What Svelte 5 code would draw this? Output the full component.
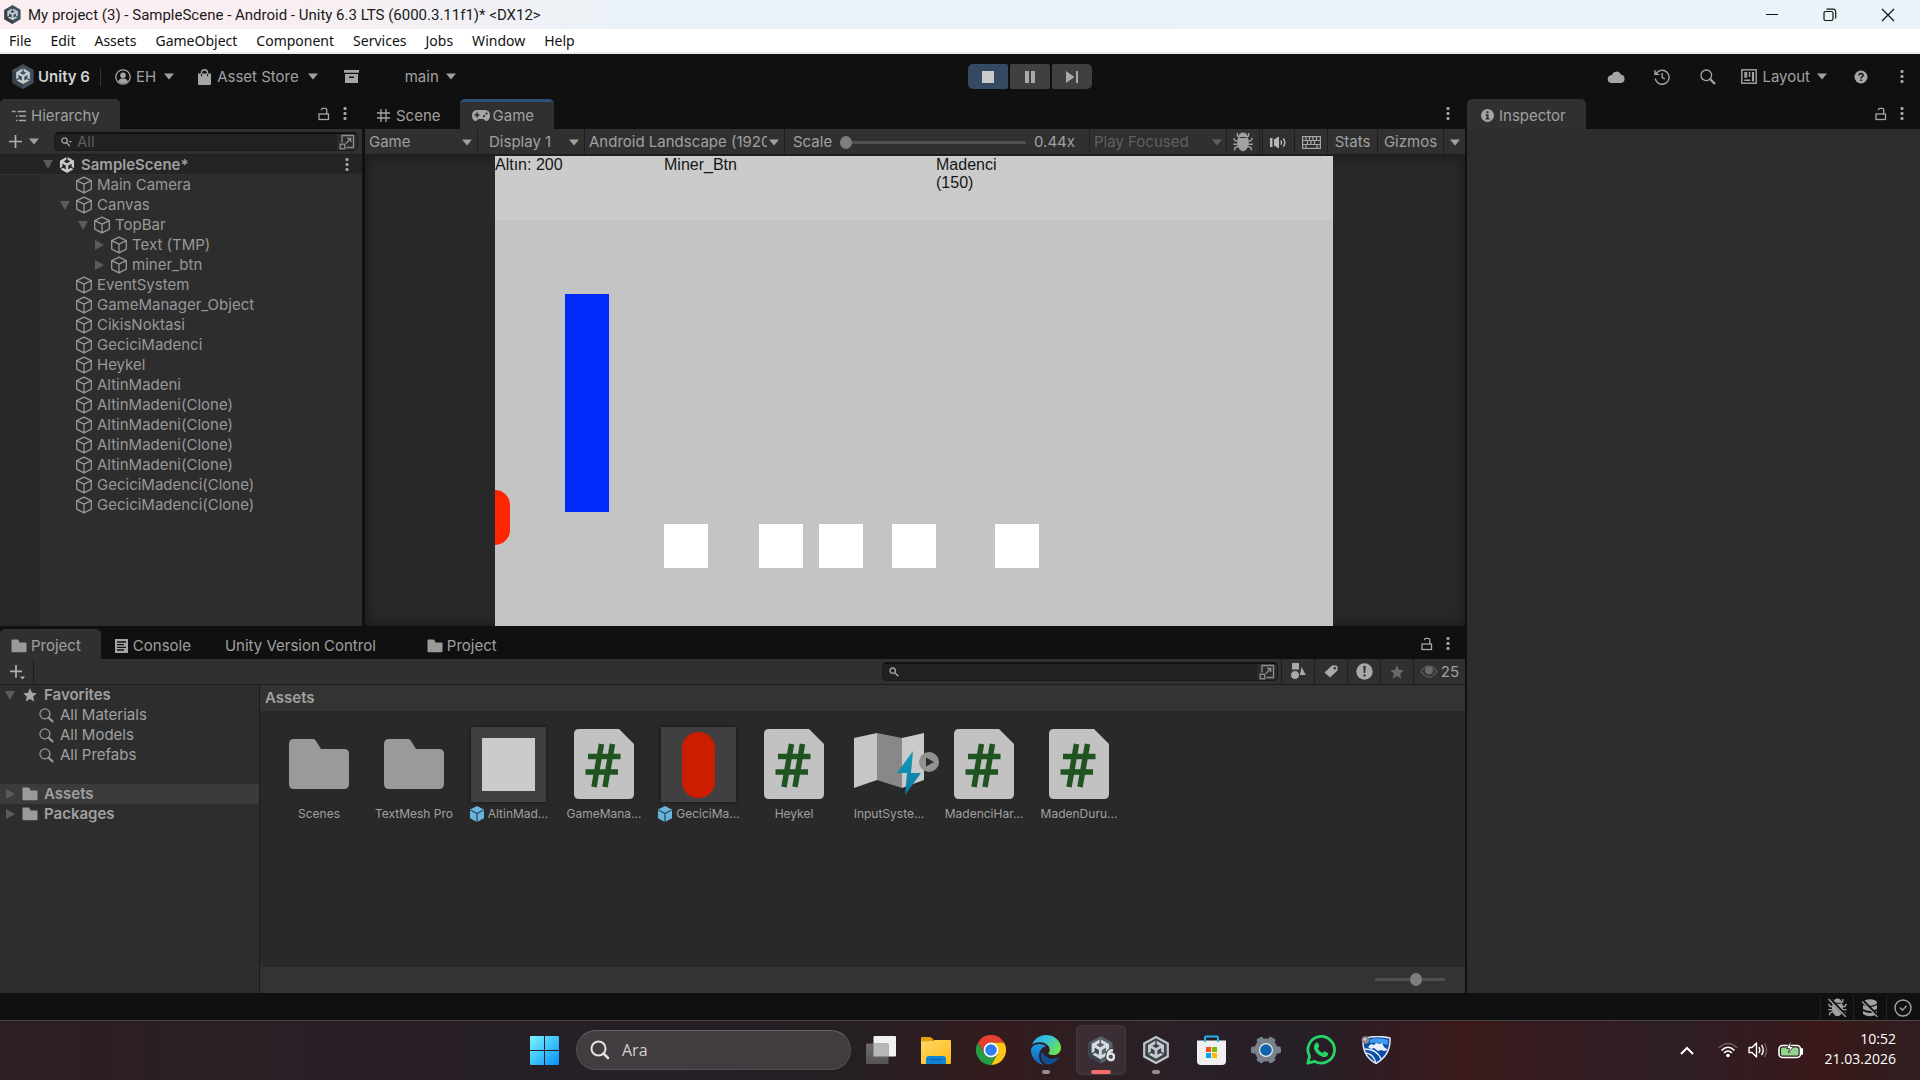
<script>
  const menus = ['File', 'Edit', 'Assets', 'GameObject', 'Component', 'Services', 'Jobs', 'Window', 'Help'];

  const tree = [
    { name: 'Main Camera', depth: 0 },
    { name: 'Canvas', depth: 0, arrow: 'open' },
    { name: 'TopBar', depth: 1, arrow: 'open' },
    { name: 'Text (TMP)', depth: 2, arrow: 'closed' },
    { name: 'miner_btn', depth: 2, arrow: 'closed' },
    { name: 'EventSystem', depth: 0 },
    { name: 'GameManager_Object', depth: 0 },
    { name: 'CikisNoktasi', depth: 0 },
    { name: 'GeciciMadenci', depth: 0 },
    { name: 'Heykel', depth: 0 },
    { name: 'AltinMadeni', depth: 0 },
    { name: 'AltinMadeni(Clone)', depth: 0 },
    { name: 'AltinMadeni(Clone)', depth: 0 },
    { name: 'AltinMadeni(Clone)', depth: 0 },
    { name: 'AltinMadeni(Clone)', depth: 0 },
    { name: 'GeciciMadenci(Clone)', depth: 0 },
    { name: 'GeciciMadenci(Clone)', depth: 0 }
  ];

  const mines = [169, 264, 324, 397, 500];

  const assets = [
    { name: 'Scenes', kind: 'folder' },
    { name: 'TextMesh Pro', kind: 'folder' },
    { name: 'AltinMad...', kind: 'square', prefab: true },
    { name: 'GameMana...', kind: 'script' },
    { name: 'GeciciMa...', kind: 'capsule', prefab: true },
    { name: 'Heykel', kind: 'script' },
    { name: 'InputSyste...', kind: 'input' },
    { name: 'MadenciHar...', kind: 'script' },
    { name: 'MadenDuru...', kind: 'script' }
  ];

  const unityMark =
    'm12.9288 4.2939 3.7997 2.1929c.1366.077.1415.2905 0 .3675l-4.515 2.6076a.4192.4192 0 0 1-.4246 0L7.274 6.8543c-.139-.0745-.1415-.293 0-.3675l3.7972-2.193V0L1.3758 5.5977V16.793l3.7177-2.1456v-4.3858c-.0025-.1565.1813-.2682.318-.1838l4.5148 2.6076a.4252.4252 0 0 1 .2136.3676v5.2127c.0025.1565-.1813.2682-.3179.1838l-3.7996-2.1929-3.7178 2.1457L12 24l9.6954-5.5977-3.7178-2.1457-3.7996 2.1929c-.1341.082-.3229-.0248-.3179-.1838v-5.2127c0-.1565.087-.2956.2136-.3676l4.5149-2.6076c.134-.082.3228.0224.3179.1838v4.3858l3.7177 2.1456V5.5977L12.9288 0Z';
</script>

{#snippet caret()}
  <svg class="caret" width="10" height="7" viewBox="0 0 10 7"><path d="M0 .5h10L5 6.5z" fill="currentColor" /></svg>
{/snippet}

{#snippet dots()}
  <svg width="4" height="14" viewBox="0 0 4 14" fill="#a5a5a5"><rect x=".5" y="0" width="3" height="3" rx="1" /><rect x=".5" y="5" width="3" height="3" rx="1" /><rect x=".5" y="10" width="3" height="3" rx="1" /></svg>
{/snippet}

{#snippet lock()}
  <svg width="12" height="14" viewBox="0 0 12 14" fill="none" stroke="#a5a5a5" stroke-width="1.3"><rect x="1" y="7" width="9.5" height="5.5" /><path d="M3.5 3.3V2.6c0-.8.6-1.3 1.4-1.3h2.4c.8 0 1.4.5 1.4 1.3V7" /></svg>
{/snippet}

{#snippet folder()}
  <svg width="16" height="14" viewBox="0 0 16 14" fill="#9a9a9a"><path d="M.5 1.2q0-.7.7-.7h5.3q.6 0 .9.6L8.5 3.5h6.3q.7 0 .7.7v8.3q0 .8-.8.8H1.3q-.8 0-.8-.8z" /></svg>
{/snippet}

{#snippet plus()}
  <svg width="15" height="15" viewBox="0 0 15 15"><path d="M7.5 1v13M1 7.5h13" stroke="#b0b0b0" stroke-width="1.7" /></svg>
{/snippet}

{#snippet popout()}
  <svg width="16" height="16" viewBox="0 0 16 16" fill="none" stroke="#909090" stroke-width="1.3"><path d="M3 8.5v-7h11.500v12H7.500" /><rect x="1.2" y="10.2" width="4.6" height="4.6" /><path d="M7 9.500 11.500 4.500M8 4.300h3.700V8" /></svg>
{/snippet}

{#snippet glass(size, color)}
  <svg width={size} height={size} viewBox="0 0 16 16" fill="none" stroke={color}><circle cx="6.3" cy="6.3" r="5.3" stroke-width="1.3" /><path d="m10.300 10.300 4.700 4.700" stroke-width="2.3" /></svg>
{/snippet}

{#snippet star(color)}
  <svg width="14" height="14" viewBox="0 0 14 14" fill={color}><path d="m7 .3 2 4.500 4.800.5-3.600 3.300 1 4.900L7 11l-4.200 2.500 1-4.900L.2 5.300 5 4.800z" /></svg>
{/snippet}

{#snippet bug(size, crossed)}
  <svg width={size} height={size} viewBox="0 0 18 18"><path d="M5 4.500a4 4 0 0 1 8 0zM4.500 5.500h9c1 2 1 6-.3 8.500-.9 1.900-2.500 3.300-4.200 3.300s-3.300-1.400-4.200-3.300C3.500 11.500 3.500 7.500 4.500 5.500z" fill="#a2a2a2" /><path d="M4 1v2.500l2 1.500M14 1v2.500l-2 1.500M.5 5.500l1.500 2.500h2.500M17.500 5.500 16 8h-2.500M.3 11h4M17.700 11h-4M1.300 16.500l.7-2.500 2.700-1M16.700 16.500l-.7-2.500-2.700-1" fill="none" stroke="#a2a2a2" stroke-width="1.3" />{#if crossed}<path d="m1 0 17 18" stroke="#101010" stroke-width="3" /><path d="m.5 1 16.500 17" stroke="#a2a2a2" stroke-width="1.3" />{/if}</svg>
{/snippet}

{#snippet cube()}
  <svg class="cube" width="18" height="18" viewBox="0 0 18 18" fill="none" stroke="#979797" stroke-width="1.3" stroke-linejoin="round"><path d="M9 1.200 16.300 4.700v8.400L9 16.900 1.700 13.100V4.700zM1.700 4.700 9 8.200l7.300-3.500M9 8.200v8.700" /></svg>
{/snippet}

{#snippet unityBadge(w, h)}
  <svg width={w} height={h} viewBox="0 0 30 34"><path d="M15 0 29.500 8.300v17.400L15 34 .5 25.700V8.300z" fill="#41505c" /><path d="M15 17 .5 8.300v17.400L15 34z" fill="#35414b" /><g transform="translate(4.500 6.200) scale(.88)"><path d={unityMark} fill="#c3cbd1" /></g></svg>
{/snippet}

<div class="screen">
  <header class="titlebar">
    {@render unityBadge(17, 19)}
    <h1>My project (3) - SampleScene - Android - Unity 6.3 LTS (6000.3.11f1)* &lt;DX12&gt;</h1>
    <button aria-label="Minimize"><svg width="14" height="14" viewBox="0 0 14 14"><path d="M1 6.500h12" stroke="#111" /></svg></button>
    <button aria-label="Restore"><svg width="14" height="14" viewBox="0 0 14 14" fill="none" stroke="#111" stroke-width="1.2"><rect x="1" y="3.5" width="9" height="9" rx="1.5" /><path d="M3.500 1.200h7a2.200 2.200 0 0 1 2.200 2.200v7" /></svg></button>
    <button aria-label="Close"><svg width="14" height="14" viewBox="0 0 14 14"><path d="m1 1 12 12M13 1 1 13" stroke="#111" stroke-width="1.2" /></svg></button>
  </header>

  <nav class="menubar">
    {#each menus as m}<button>{m}</button>{/each}
  </nav>

  <div class="toolbar">
    <div class="tb-left">
      <button class="brand">{@render unityBadge(22, 25)}<b>Unity 6</b></button>
      <span class="tb-sep"></span>
      <button class="account">
        <svg width="16" height="16" viewBox="0 0 16 16"><circle cx="8" cy="8" r="7.2" fill="none" stroke="#a5a5a5" stroke-width="1.3" /><circle cx="8" cy="6.3" r="2.8" fill="#a5a5a5" /><path d="M3 12.500c1-2.500 3-3 5-3s4 .5 5 3A7 7 0 0 1 3 12.500z" fill="#a5a5a5" /></svg>
        EH {@render caret()}
      </button>
      <button class="store">
        <svg width="13" height="16" viewBox="0 0 13 16"><path d="M0 4.500h13V15q0 1-1 1H1q-1 0-1-1z" fill="#a5a5a5" /><path d="M3.500 7V3.500a3 2.800 0 0 1 6 0V7" fill="none" stroke="#a5a5a5" stroke-width="1.4" /><path d="M3.500 5v2.200M9.500 5v2.200" stroke="#222" stroke-width="1.2" /></svg>
        Asset Store {@render caret()}
      </button>
      <button class="package" aria-label="Package Manager"><svg width="15" height="13" viewBox="0 0 15 13" fill="#a5a5a5"><path d="M0 0h15v2.800H0zM1 4h13v9H1z" /><path d="M5 6.500h5v1.500H5z" fill="#111" /></svg></button>
      <button class="branch">main {@render caret()}</button>
    </div>
    <div class="play">
      <button class="on" aria-label="Stop"><svg width="12" height="12"><rect width="12" height="12" fill="#c9c9c9" /></svg></button>
      <button aria-label="Pause"><svg width="10" height="12" fill="#a9a9a9"><rect width="4" height="12" /><rect x="6" width="4" height="12" /></svg></button>
      <button aria-label="Step"><svg width="12" height="12" viewBox="0 0 12 12" fill="#a9a9a9"><path d="M0 0 8.500 6 0 12zM10 0h2v12h-2z" /></svg></button>
    </div>
    <div class="tb-right">
      <button aria-label="Cloud"><svg width="18" height="13" viewBox="0 0 18 13"><path d="M4 13a4 4 0 0 1-.3-7.800 1.500 1.500 0 0 1 1.200 0A4.700 4.700 0 0 1 13.800 4.500 4.300 4.300 0 0 1 14 13z" fill="#a5a5a5" /></svg></button>
      <button class="history" aria-label="Undo history"><svg width="16" height="16" viewBox="0 0 16 16" fill="none" stroke="#a5a5a5" stroke-width="1.4"><path d="M1.800 5.200A7 7 0 1 1 1.200 9.500M1 1.200V5.400h4.300M8.200 4v4.500L11 10" /></svg></button>
      <button class="find" aria-label="Search">{@render glass(16, '#a5a5a5')}</button>
      <button class="layout">
        <svg width="16" height="15" viewBox="0 0 16 15" fill="none" stroke="#a5a5a5" stroke-width="1.4"><rect x=".8" y=".8" width="14.4" height="13.4" /><path d="M4 3v5h1.500V3M8.500 3v5M3.300 11.200h6" /><path d="M12 3v9.300" stroke-width="2.2" /></svg>
        Layout {@render caret()}
      </button>
      <button class="help" aria-label="Help"><svg width="14" height="14" viewBox="0 0 14 14"><circle cx="7" cy="7" r="6.5" fill="#a5a5a5" /><path d="M5 5.500C5 4 6 3.400 7 3.400s2.100.7 2.100 1.900C9.100 6.800 7 6.700 7 8.400M7 9.600v1.500" fill="none" stroke="#111" stroke-width="1.5" /></svg></button>
      <button class="more" aria-label="More">{@render dots()}</button>
    </div>
  </div>

  <main class="editor">
    <div class="left">
      <div class="upper">
        <section class="dock hierarchy">
          <div class="tabs">
            <button class="tab active">
              <svg width="14" height="12" viewBox="0 0 14 12" fill="none" stroke="#a5a5a5" stroke-width="1.3"><path d="M0 1.500h3.500M5.500 1.500H14M4 6h1.500M7 6h7M4 10.500h1.500M7 10.500h7" /></svg>
              Hierarchy
            </button>
            <span class="tab-tools"><button aria-label="Lock">{@render lock()}</button><button aria-label="Options">{@render dots()}</button></span>
          </div>
          <div class="bar">
            <button class="add" aria-label="Create">{@render plus()}{@render caret()}</button>
            <label class="search">
              <svg width="11" height="10" viewBox="0 0 11 10" fill="none" stroke="#a5a5a5" stroke-width="1.3"><circle cx="3.5" cy="3.5" r="2.7" /><path d="m5.500 5.500 3.300 3.500" /><path d="M7.500 4h3.500L9.300 5.800z" fill="#a5a5a5" stroke="none" /></svg>
              <input type="text" placeholder="All" aria-label="Search hierarchy" />
              <button aria-label="Open in search">{@render popout()}</button>
            </label>
          </div>
          <div class="tree">
            <div class="scene-row">
              <svg width="10" height="9" viewBox="0 0 10 9"><path d="M0 0h10L5 9z" fill="#5b5b5b" /></svg>
              <svg width="16" height="16" viewBox="0 0 24 24"><path d={unityMark} fill="#c9c9c9" /></svg>
              <b>SampleScene*</b>
              <button aria-label="Scene options">{@render dots()}</button>
            </div>
            <ul>
              {#each tree as n}
                <li class={`d${n.depth}`}>
                  <span class="arrow">
                    {#if n.arrow === 'open'}<svg width="10" height="9" viewBox="0 0 10 9"><path d="M0 0h10L5 9z" fill="#5b5b5b" /></svg>
                    {:else if n.arrow === 'closed'}<svg width="9" height="10" viewBox="0 0 9 10"><path d="M0 0v10l9-5z" fill="#5b5b5b" /></svg>{/if}
                  </span>
                  {@render cube()}
                  {n.name}
                </li>
              {/each}
            </ul>
          </div>
        </section>

        <section class="dock game">
          <div class="tabs">
            <button class="tab scene">
              <svg width="13" height="13" viewBox="0 0 13 13" stroke="#a5a5a5" stroke-width="1.3"><path d="M4 0v13M9 0v13M0 4h13M0 9h13" /></svg>
              Scene
            </button>
            <button class="tab active focus">
              <svg width="18" height="11" viewBox="0 0 18 11"><path d="M5 0h8a5 5 0 0 1 5 5.300C18 8.500 16.500 11 14.500 11c-1.700 0-2.300-2-3.300-2H6.800c-1 0-1.600 2-3.300 2C1.500 11 0 8.500 0 5.300A5 5 0 0 1 5 0z" fill="#a5a5a5" /><path d="M5 2.500v5M2.500 5h5" stroke="#2e2e2e" stroke-width="1.6" /><circle cx="12" cy="6.200" r="1.1" fill="#2e2e2e" /><circle cx="14.500" cy="3.700" r="1.1" fill="#2e2e2e" /></svg>
              Game
            </button>
            <span class="tab-tools"><button aria-label="Options">{@render dots()}</button></span>
          </div>
          <div class="bar game-bar">
            <span class="drop w-mode"><select aria-label="View mode"><option>Game</option></select>{@render caret()}</span>
            <span class="drop w-display"><select aria-label="Display"><option>Display 1</option></select>{@render caret()}</span>
            <span class="drop w-aspect"><select aria-label="Aspect"><option>Android Landscape (1920x1080)</option></select>{@render caret()}</span>
            <label class="scale">Scale <input type="range" min="0" max="100" value="0" /><span>0.44x</span></label>
            <span class="drop w-focus dim"><select aria-label="Play focus"><option>Play Focused</option></select>{@render caret()}</span>
            <button class="w-bug" aria-label="Debug">{@render bug(20, false)}</button>
            <button class="w-sound" aria-label="Mute audio"><svg width="17" height="13" viewBox="0 0 17 13"><path d="M0 2h2.500v9H0zM4 3.500 9 .5v12L4 9.500z" fill="#b8b8b8" /><path d="M10.800 4.300q1.500 2.200 0 4.400M13.300 2.500q3 4 0 8" fill="none" stroke="#b8b8b8" stroke-width="1.4" /></svg></button>
            <button class="w-keys" aria-label="Shortcuts"><svg width="19" height="13" viewBox="0 0 19 13" fill="none" stroke="#a5a5a5" stroke-width="1.2"><rect x=".6" y=".6" width="17.8" height="11.8" /><path d="M0 4.500h19M0 8.500h19M4 .6v4M7.500.6v4M11 .6v4M14.500.6v4M5.500 4.500v4M9 4.500v4M12.500 4.500v4M4 8.500v4M15 8.500v4" /></svg></button>
            <button class="w-stats">Stats</button>
            <button class="w-gizmos">Gizmos</button>
            <button class="w-more" aria-label="Gizmo options">{@render caret()}</button>
          </div>
          <div class="viewport">
            <div class="canvas">
              <div class="hud"></div>
              <span class="label gold">Altın: 200</span>
              <span class="label miner">Miner_Btn</span>
              <span class="label cost">Madenci<br />(150)</span>
              <div class="statue"></div>
              <div class="worker"></div>
              {#each mines as x}<div class="mine" style:left={`${x}px`}></div>{/each}
            </div>
          </div>
        </section>
      </div>

      <section class="dock project">
        <div class="tabs">
          <button class="tab active">{@render folder()} Project</button>
          <button class="tab console">
            <svg width="13" height="14" viewBox="0 0 13 14"><path d="M0 0h13v14H0z" fill="#a5a5a5" /><path d="M2 3h9M2 5.700h7M2 8.400h9M2 11h7" stroke="#111" stroke-width="1.3" /></svg>
            Console
          </button>
          <button class="tab uvc">Unity Version Control</button>
          <button class="tab second">{@render folder()} Project</button>
          <span class="tab-tools"><button aria-label="Lock">{@render lock()}</button><button aria-label="Options">{@render dots()}</button></span>
        </div>
        <div class="bar project-bar">
          <button class="new" aria-label="Create asset"><svg width="16" height="16" viewBox="0 0 16 16"><path d="M7 1v12.500M1 7.300h12" stroke="#b0b0b0" stroke-width="1.8" /><path d="M11 12.500h5l-2.500 3z" fill="#b0b0b0" /></svg></button>
          <label class="search">
            <svg width="10" height="10" viewBox="0 0 10 10" fill="none" stroke="#a5a5a5" stroke-width="1.4"><circle cx="3.7" cy="3.7" r="2.7" /><path d="m5.800 5.800 3.500 3.500" /></svg>
            <input type="text" aria-label="Search project" />
            <button aria-label="Open in search">{@render popout()}</button>
          </label>
          <button class="filter" aria-label="Filter by type"><svg width="16" height="17" viewBox="0 0 16 17" fill="#a9a9a9"><path d="M2 0h7v6.500H2z" /><circle cx="5" cy="12" r="4.5" stroke="#2f2f2f" /><path d="m11.500 4 4.300 8h-6z" /></svg></button>
          <button class="filter" aria-label="Filter by label"><svg width="14" height="13" viewBox="0 0 14 13"><path d="M8 .5h4q1.500 0 1.500 1.500v3.500L6 12.500.5 7.500z" fill="#a9a9a9" /><circle cx="10.800" cy="3.300" r="1.2" fill="#2f2f2f" /></svg></button>
          <button class="filter" aria-label="Filter by log"><svg width="17" height="17" viewBox="0 0 17 17"><circle cx="8.500" cy="8.500" r="8.2" fill="#a9a9a9" /><path d="M7.300 3h2.400L9.200 10H7.800zM7.500 11.500h2v2h-2z" fill="#2a2a2a" /></svg></button>
          <button class="filter" aria-label="Favorite search">{@render star('#686868')}</button>
          <button class="hidden-count"><svg width="18" height="13" viewBox="0 0 18 13"><path d="M1 6.500Q9-4.500 17 6.500 9 17.500 1 6.500z" fill="none" stroke="#555" stroke-width="1.5" /><circle cx="9" cy="5.500" r="4" fill="#6a6a6a" /></svg>25</button>
        </div>
        <div class="project-body">
          <aside>
            <div class="row top"><svg width="10" height="9" viewBox="0 0 10 9"><path d="M0 0h10L5 9z" fill="#5b5b5b" /></svg><span class="ic">{@render star('#a5a5a5')}</span><b>Favorites</b></div>
            <div class="row sub">{@render glass(15, '#9a9a9a')}All Materials</div>
            <div class="row sub">{@render glass(15, '#9a9a9a')}All Models</div>
            <div class="row sub">{@render glass(15, '#9a9a9a')}All Prefabs</div>
            <div class="row top picked"><svg width="10" height="10" viewBox="0 0 10 10"><path d="M1 0v10l9-5z" fill="#5b5b5b" /></svg><span class="ic">{@render folder()}</span><b>Assets</b></div>
            <div class="row top"><svg width="10" height="10" viewBox="0 0 10 10"><path d="M1 0v10l9-5z" fill="#5b5b5b" /></svg><span class="ic">{@render folder()}</span><b>Packages</b></div>
          </aside>
          <div class="browser">
            <div class="crumb">Assets</div>
            <div class="grid">
              {#each assets as a}
                <figure>
                  <div class="thumb" class:tile={a.prefab}>
                    {#if a.kind === 'folder'}
                      <svg width="60" height="50" viewBox="0 0 60 50"><path d="M0 5q0-5 5-5h19q2 0 3 2l5 8h23q5 0 5 5v30q0 5-5 5H5q-5 0-5-5z" fill="#9a9a9a" /></svg>
                    {:else if a.kind === 'square'}
                      <svg width="53" height="53"><rect width="53" height="53" fill="#cbcbcb" /></svg>
                    {:else if a.kind === 'capsule'}
                      <svg width="33" height="66"><rect width="33" height="66" rx="16" fill="#cc1d00" /></svg>
                    {:else if a.kind === 'script'}
                      <svg width="60" height="70" viewBox="0 0 60 70"><path d="M0 5q0-5 5-5h40l15 15v50q0 5-5 5H5q-5 0-5-5z" fill="#c2c2c2" /><path d="M27.500 15 20 58M38.500 15 31 58M14 27.500h32.500M11.500 43h32.500" stroke="#1f5320" stroke-width="5.5" fill="none" /></svg>
                    {:else}
                      <svg class="map" width="86" height="64" viewBox="0 0 86 64">
                        <defs><linearGradient id="bolt" x2="0" y2="1"><stop stop-color="#159bb4" /><stop offset="1" stop-color="#0a7ba8" /></linearGradient></defs>
                        <path d="M0 6 23 1v47L0 56z" fill="#c6c6c6" /><path d="m23 1 25 5v50l-25-8z" fill="#888" /><path d="m48 6 22-5v47l-22 8z" fill="#cacaca" />
                        <path d="M59 19 43 41h10l-2 22 16-22H57z" fill="url(#bolt)" /><circle cx="75" cy="30" r="10" fill="#929292" /><path d="M72 25.500v9l8-4.500z" fill="#2b2b2b" />
                      </svg>
                    {/if}
                  </div>
                  <figcaption>
                    {#if a.prefab}<svg width="14" height="16" viewBox="0 0 14 16"><path d="M7 0 14 3.500v8.800L7 16 0 12.300V3.500z" fill="#69b4dc" /><path d="M.5 4 7 7.500 13.500 4M7 7.500V16" fill="none" stroke="#2a4a5c" stroke-width="1.3" /></svg>{/if}
                    {a.name}
                  </figcaption>
                </figure>
              {/each}
            </div>
            <div class="zoombar"><input type="range" min="0" max="100" value="60" aria-label="Icon size" /></div>
          </div>
        </div>
      </section>
    </div>

    <section class="dock inspector">
      <div class="tabs">
        <button class="tab active">
          <svg width="13" height="13" viewBox="0 0 13 13"><circle cx="6.500" cy="6.500" r="6.5" fill="#a5a5a5" /><path d="M5.500 2.300h2v2h-2zM4.500 5.300h3v4h1v1.300h-4V9.300h1V6.500h-1z" fill="#2e2e2e" /></svg>
          Inspector
        </button>
        <span class="tab-tools"><button aria-label="Lock">{@render lock()}</button><button aria-label="Options">{@render dots()}</button></span>
      </div>
      <div class="inspector-body"></div>
    </section>
  </main>

  <footer class="status">
    <button aria-label="Debugger">{@render bug(19, true)}</button>
    <button aria-label="Cache server"><svg width="18" height="18" viewBox="0 0 18 18" fill="#a2a2a2"><ellipse cx="9" cy="3.500" rx="7" ry="3.3" /><path d="M2 6q7 4 14 0v4q-7 4-14 0zM2 12q7 4 14 0v3q-7 4.500-14 0z" /><path d="m1 1 17 17" stroke="#101010" stroke-width="3" /><path d="m1 2.500 15.500 15.500" stroke="#a2a2a2" stroke-width="1.3" /></svg></button>
    <button aria-label="Progress"><svg width="18" height="18" viewBox="0 0 18 18" fill="none" stroke="#a2a2a2" stroke-width="1.4"><circle cx="9" cy="9" r="8" /><path d="m5.800 8.500 2.700 2.700 4-4.500" /></svg></button>
  </footer>

  <nav class="taskbar">
    <div class="side"></div>
    <div class="apps">
      <button aria-label="Start"><svg width="29" height="29" viewBox="0 0 29 29"><defs><linearGradient id="win" x2="1" y2="1"><stop stop-color="#7df3ff" /><stop offset=".5" stop-color="#3fc3fb" /><stop offset="1" stop-color="#0a8ef5" /></linearGradient></defs><path d="M1 0h13v14H0V1q0-1 1-1zM15 0h13q1 0 1 1v13H15zM0 15h14v14H1q-1 0-1-1zM15 15h14v13q0 1-1 1H15z" fill="url(#win)" /></svg></button>
      <label class="task-search">
        <svg width="20" height="20" viewBox="0 0 20 20" fill="none" stroke="#e4e0e2"><circle cx="8.500" cy="8.500" r="7" stroke-width="2" /><path d="m13.500 13.500 4.500 4.500" stroke-width="2.5" stroke-linecap="round" /></svg>
        <input type="text" placeholder="Ara" aria-label="Ara" />
      </label>
      <button aria-label="Task view"><svg width="30" height="28" viewBox="0 0 30 28"><defs><linearGradient id="pane" x2="0" y2="1"><stop stop-color="#6e6c6d" /><stop offset="1" stop-color="#555354" /></linearGradient></defs><rect x="7.5" width="22.5" height="20.5" rx="1" fill="#f1f1f1" /><rect y="7.5" width="22.5" height="20.5" rx="1" fill="url(#pane)" /><path d="M7.500 7.500h15v13h-15z" fill="#b9b8b9" /></svg></button>
      <button aria-label="File Explorer"><svg width="30" height="27" viewBox="0 0 30 27"><defs><linearGradient id="fold" x2="1" y2="1"><stop stop-color="#ffd968" /><stop offset="1" stop-color="#fdb913" /></linearGradient></defs><path d="M0 1q0-1 1-1h8.500l3 2.500V8H0z" fill="#e0a008" /><path d="M0 4.500 12 4l1.500-1H29q1 0 1 1v22q0 1-1 1H1q-1 0-1-1z" fill="url(#fold)" /><path d="M5 27v-5q0-3 3-3h14q3 0 3 3v5z" fill="#1284d8" /><path d="M8.500 22.700h13" stroke="#0b5ea8" stroke-width="1.2" /></svg></button>
      <button aria-label="Chrome"><svg width="30" height="30" viewBox="0 0 48 48"><path d="M3.200 12A24 24 0 0 1 44.800 12H24A12 12 0 0 0 13.600 30z" fill="#e8402f" /><path d="M44.800 12A24 24 0 0 1 24 48l10.400-18L24 12z" fill="#fbc417" /><path d="M24 48A24 24 0 0 1 3.200 12l10.400 18a12 12 0 0 0 20.800 0z" fill="#259b45" /><circle cx="24" cy="24" r="12" fill="#fff" /><circle cx="24" cy="24" r="9.3" fill="#2d7ef0" /></svg></button>
      <button class="open" aria-label="Edge"><svg width="30" height="30" viewBox="0 0 24 24"><defs><linearGradient id="edgeA" x2="1" y2=".5"><stop stop-color="#2aa7e8" /><stop offset=".5" stop-color="#34c3dc" /><stop offset="1" stop-color="#6be253" /></linearGradient><linearGradient id="edgeB" x2="0" y2="1"><stop stop-color="#1b9ae0" /><stop offset="1" stop-color="#1260b8" /></linearGradient></defs><path d="M21.860 17.860q.14 0 .25.12.1.13.1.25t-.11.33l-.32.46-.43.53-.44.5q-.26.25-.38.37l-.22.23q-.58.53-1.340 1.040-.76.51-1.600.91-.86.4-1.740.64t-1.670.24q-.9 0-1.690-.28-.8-.28-1.480-.78-.68-.5-1.220-1.170-.53-.66-.92-1.440-.38-.77-.58-1.600-.2-.83-.2-1.670 0-1 .32-1.960.33-.97.87-1.800.14.95.55 1.770.41.82 1.020 1.500.6.68 1.380 1.210.78.54 1.640.9.86.36 1.770.56.92.2 1.800.2 1.120 0 2.180-.24 1.060-.23 2.060-.72l.2-.1.2-.05z" fill="#0f4f93" /><path d="M6.360 16.590q0 1.100.27 2.150.27 1.060.78 2.030.51.96 1.240 1.770.74.82 1.660 1.400-1.470-.2-2.800-.74-1.330-.55-2.480-1.370-1.150-.83-2.080-1.900-.92-1.070-1.580-2.330T.36 14.940Q0 13.540 0 12.060q0-.81.32-1.490.31-.68.83-1.230.53-.55 1.200-.96.66-.4 1.350-.66.74-.27 1.500-.39.78-.12 1.550-.12.7 0 1.420.1.72.12 1.400.35.68.23 1.320.57.63.35 1.160.83-.35 0-.7.07-.33.07-.65.23v-.02q-.63.28-1.200.74-.57.46-1.050 1.040-.48.58-.87 1.260-.38.67-.65 1.390-.27.71-.42 1.440-.15.72-.15 1.380z" fill="url(#edgeB)" /><path d="M11.960.06q1.700 0 3.330.39 1.630.38 3.070 1.150 1.430.77 2.620 1.930 1.180 1.160 1.980 2.700.49.94.76 1.960.28 1 .28 2.080 0 .89-.23 1.700-.24.8-.69 1.480-.45.68-1.100 1.220-.64.53-1.450.88-.54.24-1.110.36-.58.13-1.160.13-.42 0-.97-.03-.54-.03-1.100-.12-.55-.1-1.050-.28-.5-.19-.84-.5-.12-.09-.23-.24-.1-.16-.1-.33 0-.15.16-.35.16-.2.35-.5.2-.28.36-.68.16-.4.16-.95 0-1.060-.4-1.960-.4-.91-1.060-1.640-.66-.74-1.520-1.280-.86-.55-1.790-.89-.84-.3-1.720-.44-.87-.14-1.760-.14-1.550 0-3.060.45T.94 7.550q.71-1.740 1.810-3.130 1.100-1.380 2.520-2.350Q6.680 1.100 8.370.58q1.700-.52 3.580-.52Z" fill="url(#edgeA)" /></svg></button>
      <button class="current" aria-label="Unity Editor"><svg width="28" height="28" viewBox="0 0 28 28"><path d="M14 0 25.500 6.800v14L14 27.500 1.500 20.800v-14z" fill="#56626b" /><path d="M13.500 13.500v14l-12-6.700v-14z" fill="#39434b" /><g transform="translate(3.500 3.500) scale(.82)"><path d={unityMark} fill="#d6dade" /></g><path d="M26 14.500q-5-1-5.500 6a3.300 3.300 0 1 0 .5-1.500" fill="none" stroke="#39434b" stroke-width="4.5" /><path d="M26 14.500q-5-1-5.500 6a3.300 3.300 0 1 0 .5-1.500" fill="none" stroke="#e2e4e6" stroke-width="2.5" /></svg></button>
      <button class="open" aria-label="Unity Hub"><svg width="26" height="28" viewBox="0 0 26 28"><path d="M13 1 24.800 7.500v13L13 27 1.200 20.500v-13z" fill="#3b4248" stroke="#bfc4ca" stroke-width="2.2" /><g transform="translate(4 4.800) scale(.75)"><path d={unityMark} fill="#c5cacf" /></g></svg></button>
      <button aria-label="Microsoft Store"><svg width="29" height="30" viewBox="0 0 29 30"><path d="M0 5.500h29V26q0 4-4 4H4q-4 0-4-4z" fill="#efefef" /><path d="M8 7V2.500q0-1 1-1h11q1 0 1 1V7" fill="none" stroke="#22b0f0" stroke-width="2" /><path d="M9 12h5v5H9z" fill="#f25022" /><path d="M15 12h5v5h-5z" fill="#7fba00" /><path d="M9 18h5v5H9z" fill="#00a4ef" /><path d="M15 18h5v5h-5z" fill="#ffb900" /></svg></button>
      <button aria-label="Settings"><svg width="30" height="30" viewBox="0 0 30 30"><g fill="#78828c"><circle cx="15" cy="15" r="11.500" /><rect x="11.500" y="1" width="7" height="28" rx="2" transform="rotate(30 15 15)" /><rect x="11.500" y="0" width="7" height="30" rx="2" transform="rotate(90 15 15)" /><rect x="11.500" y="1" width="7" height="28" rx="2" transform="rotate(150 15 15)" /></g><circle cx="15" cy="15" r="7" fill="#e8eaec" /><circle cx="15" cy="15" r="5.8" fill="#1261ad" /></svg></button>
      <button aria-label="WhatsApp"><svg width="30" height="30" viewBox="0 0 30 30"><path d="M1.800 28.200 3.600 21.300A13.300 13.300 0 1 1 8.700 26.400z" fill="none" stroke="#25d366" stroke-width="2.8" stroke-linejoin="round" /><path d="M10.200 7.700c.7-.5 1.500-.4 1.900.4l1.100 2.600c.2.500 0 1-1.400 2.500.9 2 2.600 3.700 4.900 4.700 1-1.200 1.400-1.800 2.200-1.500l2.700 1.300c.8.4.6 1.700.2 2.500-1 1.600-3 2.200-4.800 1.700C12.300 20.500 9 17 8.100 13.500c-.5-2.300.4-4.700 2.100-5.800z" fill="#25d366" /></svg></button>
      <button aria-label="Rocket League"><svg width="30" height="28" viewBox="0 0 30 28"><path d="M2 3Q15-1.500 29 2q1 17-14 25.500Q1 20 2 3z" fill="#0c4da8" stroke="#dfe7f2" stroke-width="1.5" /><path d="M9 3.500Q18 1 27 4q0 3-.5 5Q17 6 9 7z" fill="#3d9cf0" /><path d="m7 11 3-3 3 1 2-2 4 1 2-1 2 4 4 3-4 1-3-1-3 1-4-3-3 1z" fill="#e9f1fb" /><path d="M3.500 13q13 0 17 11M4 17q8 0 11 10" fill="none" stroke="#dfe7f2" stroke-width="1.3" /><circle cx="4.500" cy="4" r="3.8" fill="#8b8b8b" /><circle cx="3.800" cy="3.300" r="1.5" fill="#ccc" /></svg></button>
    </div>
    <div class="side tray">
      <button class="chev" aria-label="Hidden icons"><svg width="14" height="9" viewBox="0 0 14 9"><path d="m1 8 6-6 6 6" fill="none" stroke="#fff" stroke-width="2" /></svg></button>
      <button class="net" aria-label="Network, volume, battery">
        <svg width="20" height="16" viewBox="0 0 20 16" fill="none" stroke-width="1.5"><path d="M.8 6Q10-3 19.200 6" stroke="#6d5b60" /><path d="M3.500 8.500q6.500-6.500 13 0M6 11q4-4 8 0" stroke="#fff" /><circle cx="10" cy="13.500" r="1.8" fill="#fff" /></svg>
        <svg width="20" height="18" viewBox="0 0 20 18" fill="none" stroke="#fff" stroke-width="1.4" stroke-linejoin="round"><path d="M1 6.500h3L8.500 2v14L4 11.500H1z" /><path d="M11 6q1.700 3 0 6M13.500 3.800q3.500 5.200 0 10.400" /><path d="M16.500 2q4 7 0 14" stroke="#6d5b60" /></svg>
        <svg width="26" height="18" viewBox="0 0 26 18"><rect x="1" y="4.5" width="21.5" height="12" rx="3.5" fill="#2d1d22" stroke="#fff" stroke-width="1.6" /><rect x="3" y="6.5" width="17.5" height="8" rx="1.5" fill="#93d58f" /><path d="M24 8v5" stroke="#fff" stroke-width="2" stroke-linecap="round" /><path d="M13 0 8.500 7.500h3L10.500 12l5-6.500h-3z" fill="#fff" stroke="#2d1d22" stroke-width=".8" /></svg>
      </button>
      <button class="clock"><time>10:52</time><time>21.03.2026</time></button>
    </div>
  </nav>
</div>

<style>
  :global(body) { background: #101010; }
  * { box-sizing: border-box; }
  .screen {
    display: flex; flex-direction: column; min-height: 100vh; overflow: hidden;
    background: #101010; color: #a0a0a0;
    font: 15px/20px Inter, sans-serif;
  }
  svg { display: block; flex: none; }
  button { display: flex; align-items: center; padding: 0; border: 0; background: none; color: inherit; font: inherit; white-space: nowrap; }
  input, select { font: inherit; color: inherit; border: 0; background: none; padding: 0; margin: 0; outline: 0; min-width: 0; }
  ul { list-style: none; margin: 0; padding: 0; }
  b { font-weight: 600; }

  .titlebar { display: flex; align-items: center; height: 29px; padding-left: 4px; background: linear-gradient(90deg, #fbeff2 0, #f9eef2 15%, #ebf2f7 32%, #eaf3f8 100%); color: #1a1a1a; }
  .titlebar h1 { flex: 1; margin: 0 0 0 7px; font: 400 15px/20px Roboto, sans-serif; }
  .titlebar button { justify-content: center; width: 58px; height: 29px; }
  .titlebar button:last-child { margin-right: 3px; }
  .menubar { display: flex; gap: 19px; height: 25px; padding: 1px 0 0 9px; background: #fff; border-bottom: 2px solid #ececec; color: #111; font: 14px/20px "Noto Sans", sans-serif; }

  .toolbar { display: grid; grid-template-columns: minmax(0, 968fr) auto minmax(0, 812fr); align-items: center; height: 45px; padding-right: 16px; }
  .tb-left, .tb-right, .play { display: flex; align-items: center; }
  .tb-left { padding-left: 12px; }
  .brand { gap: 4px; color: #d2d2d2; }
  .tb-sep { width: 1px; height: 18px; margin: 0 14px 0 10px; background: #333; }
  .account { gap: 5px; }
  .account .caret, .store .caret, .branch .caret { margin-left: 3px; }
  .store { gap: 6px; margin-left: 24px; }
  .package { margin-left: 26px; }
  .branch { gap: 4px; margin-left: 46px; }
  .play { gap: 2px; }
  .play button { justify-content: center; width: 40px; height: 25px; background: #404040; border-radius: 2px; }
  .play button:first-child { border-radius: 5px 2px 2px 5px; }
  .play button:last-child { border-radius: 2px 5px 5px 2px; }
  .play .on { background: #364962; }
  .tb-right { justify-content: flex-end; }
  .history { margin-left: 29px; }
  .find { margin-left: 30px; }
  .layout { margin-left: 25px; gap: 5px; }
  .layout .caret { margin-left: 2px; }
  .help { margin-left: 27px; }
  .more { margin-left: 32px; }

  .editor { display: grid; grid-template-columns: minmax(0, 1fr) 453px; gap: 2px; flex: 1; }
  .left { display: flex; flex-direction: column; gap: 2px; min-width: 0; }
  .upper { display: grid; grid-template-columns: 362px minmax(0, 1fr); gap: 3px; }
  .dock { display: flex; flex-direction: column; min-width: 0; }
  .tabs { display: flex; height: 30px; }
  .tab { gap: 5px; padding: 3px 20px 0 12px; border-radius: 5px 5px 0 0; }
  .tab.active { background: #303030; }
  .tab.focus { border-top: 3px solid #2a4f78; padding: 0 20px 0 12px; gap: 3px; }
  .tab.scene { gap: 6px; padding-right: 19px; }
  .tab-tools { display: flex; gap: 13px; align-items: center; margin-left: auto; padding-right: 15px; }
  .bar { display: flex; align-items: stretch; height: 26px; background: #303030; border-bottom: 1px solid #1d1d1d; }
  .search { display: flex; align-items: center; flex: 1; margin: 3px 4px 3px 0; padding-left: 6px; background: #212121; border: 1px solid #191919; border-top: 2px solid #111; border-radius: 5px; overflow: hidden; }
  .search input { flex: 1; padding-left: 5px; height: 16px; line-height: 16px; }
  input::placeholder { color: #5d5d5d; opacity: 1; }
  .search button { justify-content: center; width: 20px; height: 18px; background: #2b2b2b; }
  .add { gap: 6px; padding: 0 15px 0 8px; }

  .tree { flex: 1; background: linear-gradient(90deg, #282828 40px, #2d2d2d 40px); }
  .scene-row { display: flex; align-items: center; height: 20px; padding: 0 13px 0 43px; background: #242424; border-bottom: 1px solid #303030; gap: 6px; }
  .scene-row button { margin-left: auto; }
  .tree li { display: flex; align-items: center; height: 20px; padding-left: 60px; color: #989898; }
  .tree li.d1 { padding-left: 78px; }
  .tree li.d2 { padding-left: 95px; }
  .arrow { width: 15px; flex: none; }
  .cube { margin-right: 4px; }

  .game-bar > * { border-right: 1px solid #1f1f1f; justify-content: center; padding-top: 1px; }
  .drop { display: flex; align-items: center; padding: 1px 5px 0 4px; }
  .drop select { flex: 1; width: 0; appearance: none; text-overflow: clip; }
  .drop .caret { margin-left: 2px; }
  .dim { color: #606060; }
  .w-mode { width: 113px; }
  .w-display { width: 107px; padding-left: 11px; }
  .w-aspect { width: 200px; }
  .scale { display: flex; align-items: center; flex: 1; padding: 1px 14px 0 8px; gap: 8px; }
  .scale input { flex: 1; }
  .w-focus { width: 137px; padding-right: 4px; }
  .game-bar .w-bug { width: 36px; border-right: 4px double #1f1f1f; }
  .w-sound { width: 32px; }
  .w-keys { width: 33px; }
  .w-stats { width: 50px; }
  .w-gizmos { width: 66px; }
  .game-bar .w-more { width: 21px; border: 0; }
  input[type='range'] { appearance: none; height: 14px; background: linear-gradient(#4f4f4f, #4f4f4f) center / 100% 3px no-repeat; }
  input[type='range']::-webkit-slider-thumb { appearance: none; width: 12px; height: 13px; border-radius: 50%; background: #7e7e7e; }

  .viewport { display: flex; justify-content: center; flex: 1; padding: 1px 2px 0 0; background: #282828; box-shadow: inset 0 0 10px 2px #1b1b1b; }
  .canvas { position: relative; width: 838px; height: 470px; background: #c4c4c4; color: #161616; font: 16px/18px "Liberation Sans", sans-serif; }
  .hud { height: 64px; background: #cbcbcb; }
  .label { position: absolute; top: 0; }
  .gold { left: 0; }
  .miner { left: 169px; }
  .cost { left: 441px; }
  .statue { position: absolute; left: 70px; top: 138px; width: 44px; height: 218px; background: #0029fa; }
  .worker { position: absolute; left: 0; top: 334px; width: 15px; height: 55px; border-radius: 0 15px 15px 0; background: #ff2500; }
  .mine { position: absolute; top: 368px; width: 44px; height: 44px; background: #fff; }

  .project { flex: 1; }
  .project .tabs { height: 31px; padding-top: 1px; }
  .project .tab { gap: 4px; padding-left: 11px; }
  .project .console { padding-left: 14px; gap: 5px; }
  .project .uvc { padding-left: 14px; }
  .project .second { padding-left: 31px; }
  .new { justify-content: center; width: 34px; border-right: 1px solid #1f1f1f; }
  .project-bar .search { flex: 0 0 396px; margin-left: auto; margin-right: 3px; }
  .filter { justify-content: center; width: 33px; border-left: 1px solid #1f1f1f; }
  .hidden-count { justify-content: center; width: 52px; gap: 3px; border-left: 1px solid #1f1f1f; }
  .project-body { display: grid; grid-template-columns: 259px minmax(0, 1fr); gap: 1px; flex: 1; background: #1d1d1d; }
  aside { background: #2d2d2d; }
  .row { display: flex; align-items: center; height: 20px; }
  .row .ic { display: flex; justify-content: center; width: 16px; margin: 0 6px 0 7px; }
  .row.top { padding-left: 5px; }
  .row.sub { padding-left: 39px; gap: 6px; }
  .picked { margin-top: 19px; background: #3b3b3b; }
  .browser { display: flex; flex-direction: column; background: #292929; }
  .crumb { height: 26px; padding: 3px 5px; background: #333; font-weight: 600; }
  .grid { display: flex; flex-wrap: wrap; gap: 20px; flex: 1; align-content: flex-start; padding: 16px 21px; }
  figure { width: 75px; margin: 0; }
  .thumb { display: flex; align-items: center; justify-content: center; height: 75px; padding-bottom: 2px; }
  .tile { padding: 0; background: #404040; box-shadow: 0 0 3px #111; }
  .map { margin-left: 17px; }
  figcaption { display: flex; justify-content: center; align-items: center; gap: 4px; margin: 2px -11px 0 -10px; font-size: 12px; line-height: 20px; white-space: nowrap; }
  .zoombar { display: flex; align-items: center; justify-content: flex-end; height: 26px; padding: 0 20px 2px 0; background: #333; }
  .zoombar input { width: 70px; }
  .inspector .tab { padding: 3px 20px 0 14px; }
  .inspector .tab-tools { padding-right: 16px; }
  .inspector-body { flex: 1; background: #2d2d2d; }

  .status { display: flex; justify-content: flex-end; height: 27px; padding: 2px 1px 0 0; }
  .status button { justify-content: center; width: 33px; border-left: 1px solid #222; }

  .taskbar {
    display: grid; grid-template-columns: minmax(0, 1fr) auto minmax(0, 1fr); align-items: center; height: 60px; padding-bottom: 1px;
    border-top: 1px solid #4c4648; color: #fff; font: 14px/20px "Open Sans", sans-serif;
    background: linear-gradient(90deg, #2d1e22 0, #2a1f25 10%, #261f26 30%, #251f24 44%, #331b1d 52%, #2a2026 60%, #271f27 68%, #3a191b 76%, #2d1e25 87%, #391819 95%, #2f1e20 100%);
  }
  .apps { display: flex; align-items: center; gap: 5px; }
  .apps button { position: relative; justify-content: center; width: 50px; height: 50px; border-radius: 5px; }
  .apps .current { background: #3a2d33; border: 1px solid #453940; }
  .apps .open::after, .apps .current::after { content: ''; position: absolute; bottom: 1px; width: 8px; height: 4px; border-radius: 2px; background: #948e91; }
  .apps .current::after { bottom: 0; width: 20px; background: #f76b68; }
  .task-search { display: flex; align-items: center; gap: 12px; width: 275px; height: 40px; margin: 0 0 0 2px; padding-left: 13px; border: 1px solid #564e52; border-top-color: #6a6366; border-radius: 20px; background: #423c40; }
  .task-search input { width: 200px; font-size: 16px; }
  .task-search input::placeholder { color: #d2ced0; }
  .tray { display: flex; align-items: center; justify-content: flex-end; padding-right: 24px; }
  .net { gap: 10px; margin: 0 0 0 24px; }
  .clock { flex-direction: column; align-items: flex-end; width: 92px; padding-bottom: 2px; }
</style>
